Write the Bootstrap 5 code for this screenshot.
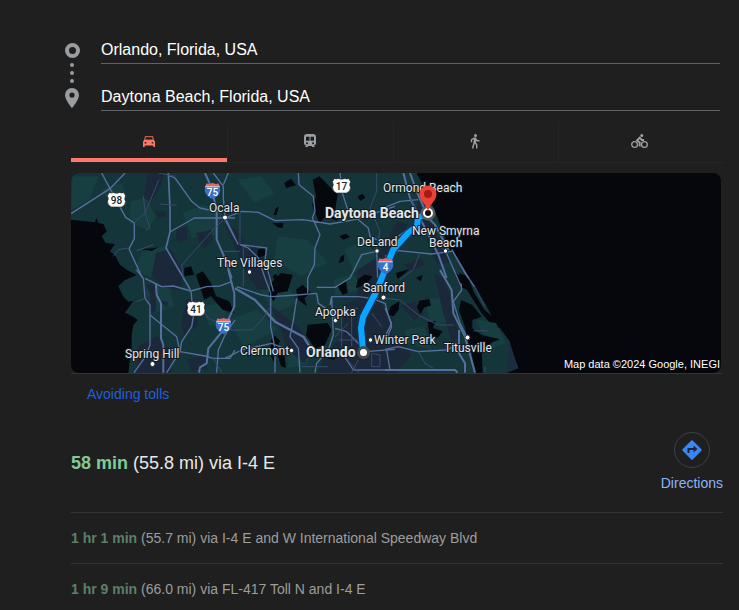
<!DOCTYPE html>
<html lang="en">
<head>
<meta charset="utf-8">
<meta name="viewport" content="width=device-width, initial-scale=1">
<title>Orlando to Daytona Beach</title>
<link href="https://cdn.jsdelivr.net/npm/bootstrap@5.3.0/dist/css/bootstrap.min.css" rel="stylesheet">
<style>
  body { background: #1f1f1f; color: #e8e8e8; font-family: "Liberation Sans", Arial, sans-serif; font-size: 14px; line-height: 20px; }
  .page-shell { padding: 35px 16px 0 65px; }
  .stops { gap: 21px; padding-right: 3px; }
  .stop-rail { margin-top: 8px; }
  .stop-fields { gap: 18px; }
  .stop-input { height: 29px; background: transparent; color: #fff; border: 0; border-bottom: 1px solid #5f6368; border-radius: 0; font-size: 16px; padding: 2px 0 0; }
  .results { margin-left: 6px; }
  .modes { margin-top: 11px; border-bottom: 1px solid #262626; }
  .mode { height: 40px; flex: 1 1 0; background: none; border: 0; border-left: 1px solid #252525; color: #9aa0a6; padding: 0 2px 2px 0; }
  .mode.active { flex: 0 0 24%; border-left: 0; border-bottom: 4px solid #ff7769; color: #ff7769; padding: 2px 0 0; }
  .map-wrap { margin-top: 10px; padding-right: 2px; border-bottom: 1px solid #333436; }
  .map-view { height: 200px; border-radius: 8px; background: #05070c; }
  .place { font-family: Roboto, sans-serif; font-size: 12px; fill: #e4e7ea; stroke: #11191f; stroke-width: 2px; paint-order: stroke; stroke-linejoin: round; }
  .place-major { font-size: 14px; font-weight: 700; }
  .credit { font-family: "Liberation Sans", Arial, sans-serif; font-size: 11px; fill: #fff; }
  .shield-no { font-family: Roboto, sans-serif; font-size: 10px; font-weight: 500; text-anchor: middle; }
  .toll-link { color: #1f60d8; margin: 10px 0 0 16px; }
  .best { margin-top: 28px; padding-bottom: 19px; }
  .best-title { font-size: 18px; line-height: 24px; }
  .time-best { color: #81c995; }
  .directions { color: #8ab4f8; gap: 5px; }
  .dir-circle { width: 36px; height: 36px; border: 1px solid #3c4043; }
  .route-row { height: 51px; border-top: 1px solid #353535; color: #9d9d9d; }
  .route-row b { color: #5c8068; }
</style>
</head>
<body>
<main class="page-shell">
  <form class="stops d-flex">
    <svg class="stop-rail flex-shrink-0" width="15" height="66" viewBox="0 0 15 66" aria-hidden="true">
      <circle cx="7.5" cy="7.5" r="5.5" fill="none" stroke="#9a9da0" stroke-width="4"/>
      <g fill="#9a9da0"><circle cx="7" cy="22" r="2"/><circle cx="7" cy="30" r="2"/><circle cx="7" cy="38" r="2"/>
      <path fill-rule="evenodd" d="M7 45a7 7 0 0 0-7 7c0 5 7 13 7 13s7-8 7-13a7 7 0 0 0-7-7zm0 4.500a2.600 2.600 0 1 1 0 5.200a2.600 2.600 0 0 1 0-5.200z"/></g>
    </svg>
    <div class="stop-fields d-flex flex-column flex-grow-1">
      <input class="stop-input w-100" type="text" aria-label="Starting point" value="Orlando, Florida, USA">
      <input class="stop-input w-100" type="text" aria-label="Destination" value="Daytona Beach, Florida, USA">
    </div>
  </form>

  <section class="results">
    <div class="modes d-flex" role="tablist" aria-label="Travel mode">
      <button class="mode active d-flex align-items-center justify-content-center" type="button" role="tab" aria-selected="true" aria-label="Driving">
        <svg width="12" height="11" viewBox="0 0 12 11"><path d="M2.500.7h7l1 3.300h-9z" fill="none" stroke="#b96543" stroke-width="1.200"/><path fill="currentColor" fill-rule="evenodd" d="M1.300 4h9.400L12 5.500V11h-1.700V9.500H1.700V11H0V5.500zM1.700 6v1.500h1.600V6zm7 0v1.500h1.600V6z"/></svg>
      </button>
      <button class="mode d-flex align-items-center justify-content-center" type="button" role="tab" aria-selected="false" aria-label="Transit">
        <svg width="12" height="14" viewBox="0 0 12 14"><path fill="currentColor" fill-rule="evenodd" d="M3 0h6c2 0 3 1 3 3v6c0 1.500-1 2.300-2.200 2.500L11 13H8.500l-.8-1H4.300l-.8 1H1l1.200-1.500C1 11.300 0 10.500 0 9V3c0-2 1-3 3-3zM2 2.800v4h3.500v-4zm4.500 0v4H10v-4zM3 8.300a1 1 0 1 0 .01 0zm6 0a1 1 0 1 0 .01 0z"/></svg>
      </button>
      <button class="mode d-flex align-items-center justify-content-center" type="button" role="tab" aria-selected="false" aria-label="Walking">
        <svg width="10" height="15" viewBox="0 0 10 15" fill="none" stroke="currentColor"><circle cx="5.500" cy="1.500" r="1.500" fill="currentColor" stroke="none"/><path stroke-width="2.400" d="M4.800 3.500v5.500"/><path stroke-width="1.400" d="M4.500 4L1.500 5.700v2.500M5.500 4.500l1.500 2.200h2.500M4.300 8.500L2.500 14.500M5 8.500l1.700 2v4"/></svg>
      </button>
      <button class="mode d-flex align-items-center justify-content-center" type="button" role="tab" aria-selected="false" aria-label="Cycling">
        <svg width="17" height="15" viewBox="0 0 17 15" fill="none" stroke="currentColor" stroke-width="1.300"><circle cx="3.600" cy="10.500" r="2.900"/><circle cx="13.400" cy="10.500" r="2.900"/><circle cx="10.800" cy="1.600" r="1.500" fill="currentColor" stroke="none"/><path stroke-width="1.900" d="M13 6h-2.200L8.800 3.700L6 6.500l2.700 2v4"/></svg>
      </button>
    </div>

    <div class="map-wrap">
      <svg class="map-view d-block w-100" viewBox="0 0 650 200" preserveAspectRatio="xMinYMid slice" role="img" aria-label="Map of the route from Orlando to Daytona Beach">
        <g transform="scale(.33333)">
          <!-- land -->
          <path fill="#14363b" d="M0 0H1037L1060 45 1092 115 1115 175 1137 230 1190 310 1164 300 1182 341 1207 381 1232 421 1262 456 1287 466 1317 506 1320 531 1342 586 1307 600H172L177 556 182 521 182 486 187 456 200 441 187 431 162 419 187 383 172 386 157 371 147 351 142 339 162 321 197 306 167 290 147 275 132 247 117 235 132 213 104 210 92 190 107 175 97 153 82 150 76 135 72 148 0 140z"/>
          <path fill="#14363b" d="M1190 310L1213 340 1240 388 1262 428 1240 410 1210 360z"/>
          <path fill="#1c2c3f" d="M1317 510L1342 586 1305 596z"/>
          <!-- lighter woodland -->
          <path fill="#173e41" d="M180 85l45-10 30 55-25 40-55-20zM210 240l70-20 20 70-50 25-60-20zM5 10h80l-30 70-55 30zM335 120l60-25 60 20-20 70-70 10zM500 20l70-10 40 50-60 30zM620 190l90 10 60 70-80 40-80-50zM820 230l60-30 40 50-70 50zM220 350l70-20 20 70-60 20zM395 400l60-10 20 60-60 10zM470 440l90-30 60 60-100 50zM560 340l80-20 40 70-70 30zM790 320l60-20 20 50-80 20zM1060 380l80-10 10 70-70 20zM1000 470l60-10 20 70-70-20zM1215 440l60 10 30 60-50 20zM650 510l70-15-10 80-60 10zM90 50l60-20 15 30-40 40z"/>
          <!-- built-up areas -->
          <path fill="#1b283a" d="M230 0h50l-10 40-30 45-22-10zM250 115h35v18h-25zM315 175l30-15 5 40-32 10zM375 180l45-10 5 30-30 30zM255 240l45-12 35 70-5 55-60-15-28-30zM460 150l40 20 25 50 60 10-5 30 20 40-10 50-30 0-35-50-25-60zM225 335h30v80l-18 5v-60zM345 380h35v80l-40 25-10-25zM200 520l60-30 35 40 5 70H195zM265 385h25v20zM600 400l30 20 60 50 30 60-20 40-50-40-20-60zM780 420l70-40 70 0 50 60 -10 50 20 50v60H740l20-50 45-55 10-60zM860 290l60-35 20 50-50 65-30 30zM980 145l30 10-30 60-50 50-10-20zM1040 80l30 30 45 115-35 5-40-100zM1080 235l45-10 15 40-40 10zM1090 300l35 20 15 60 25 110-20 20-30-95zM990 400l40-15 30 35-30 20zM930 480l70 20 20 50-50 50h-50zM350 560l50-15 10 40-50 10zM1000 275l50-20 10 20-40 20z"/>
          <!-- lakes -->
          <path fill="#05080c" d="M725 20l20-10 55 55-10 60 10 20-35-15-20 20-22-55 12-25zM640 30l20-13 15 20-30 8zM710 455l60-5 12 20-20 45-30 12-27-40zM615 105l8-4-6 25-10-1zM605 150l32 0-2 15-15-2zM560 230l20-5 5 20-25 10zM605 310l10-8 8 15-10 10zM805 190l20-8 12 10-20 8zM810 250l10-5-2 20-15 5zM860 70l15-8 8 12-15 10zM340 285l20-5 10 25-30 5zM212 228l35-2 15-4-20 12zM375 305l20-10 25 35 15 40 40 15 15 35-35-10-35-40-20 10-15-45zM600 330l30-30 35 5-15 50-30 5-12 25-15-20zM675 350l20-15 25 25-20 15 8 25-25-18zM600 500l12-12 15 15-10 25-8 40-12-25zM620 545l20 0 5 40-15-5zM780 525l20 15-10 20-25-5zM800 340l25-15 5 35-15 5zM860 320l20-15 25 5-20 25-30 10zM960 400l25-15-2 25-15 20-20-5zM975 300l40-12-10 10-25 20zM1045 383l30-5 5 20-20 5-12 20-10-20zM1070 447l25-2-10 20 30 10-15 20-25-5zM1035 315l20-10-5 20zM1170 381l34 15 28 35-28 10 0 25 28 20 55 13-20 7-35 25 3 69h-21l-14-68-13-40-5-30-18-50zM1150 300l22 10 15 40-20-10z"/>
          <!-- roads -->
          <g fill="none" stroke="#566f9d" stroke-linejoin="round">
            <g transform="translate(-18 -15)">
              <path stroke-width="4" d="M18 137L135 62 180 15M110 15L135 62 182 148 208 165V212L192 243 232 330M310 22L330 30 380 100 405 120 450 130M315 192L388 150H510M445 15L475 55V90L480 148 510 210M475 50L490 15"/>
              <path stroke-width="5" d="M310 15L315 120V192L303 240 376 365"/>
              <path stroke-width="6" d="M420 15L440 60 455 130V215L475 260 500 330"/>
              <path stroke="#3a4a6c" stroke-width="3" d="M208 163L240 135 282 35M240 135L255 180 243 187M285 108L335 112M145 265L160 245 190 240M215 248L265 230M350 292L440 190 480 150M350 290L355 330M235 85L240 130M280 15L330 25M475 250h35"/>
            </g>
            <g transform="translate(462 -15)">
              <path stroke-width="4" d="M0 150L50 130 100 133 150 158 235 155 315 168 390 155 510 115M220 15L222 50 265 85 270 130 262 150 285 200 270 240 268 290 248 330V375M345 15L352 75 370 130 400 155 430 180 435 205 455 215M0 155L40 230M45 230L70 240 100 270 120 330 137 375M45 230L125 240 120 275 145 370M455 250L410 260 375 330 330 358H275M455 250L458 330"/>
              <path stroke="#3a4a6c" stroke-width="3" d="M455 15V70L435 120 465 190 455 240M45 130V230M0 250H45M55 235V355"/>
            </g>
            <g transform="translate(942 -15)">
              <path stroke-width="6" d="M55 15L75 90 110 160 160 260 185 330M75 15L95 70 130 150 150 170 190 245"/>
              <path stroke-width="5" d="M200 245L250 330"/>
              <path stroke-width="4" d="M0 118L45 100 100 95M40 205L100 160M0 265L40 248 140 258 200 250M180 245L228 355"/>
              <path stroke="#3a4a6c" stroke-width="3" d="M105 255L85 305 45 335M75 90L95 125"/>
            </g>
            <g transform="translate(-18 291)">
              <path stroke-width="4" d="M215 0L235 25 240 85 255 105V225L240 262 207 308M240 25L290 50 325 48 378 63 425 50 465 48 500 35M378 63L385 140 380 170 350 215 345 245 305 308M255 135L335 200 345 245 420 258 445 265H495L510 240M455 308L460 240 480 195 510 150"/>
              <path stroke-width="6" d="M273 42L275 75 288 100V205L295 225V308M490 0L508 70V110L475 180 430 235 425 280 405 292 402 308"/>
              <path stroke="#3a4a6c" stroke-width="3" d="M215 95L240 85M390 90L430 145 500 175M445 265L470 308"/>
            </g>
            <g transform="translate(462 291)">
              <path stroke-width="7" d="M30 55L90 90 150 155 235 200 260 240"/>
              <path stroke-width="4" d="M35 50L110 75 140 80 215 75 275 70 280 100 325 130 330 150M137 70L137 170 150 235V308M215 85L205 150 195 200 220 235 225 308M0 265L50 240 140 220 190 240M250 235L320 240M315 105L320 80H400L440 85 480 100 500 170 480 220M320 80L325 195 310 240 275 280 270 308M330 175L365 185 405 225M345 240L385 300H510M420 245L510 238"/>
              <path stroke="#3a4a6c" stroke-width="3" d="M0 180H80L110 150 137 110M370 160L330 200M340 115H400M350 140V230M380 140V230M340 210H400M360 260L400 308M440 250V290H465V255zM400 270L380 308M440 130L470 170M230 290H310"/>
            </g>
            <g transform="translate(942 291)">
              <path stroke-width="6" d="M165 0L200 60 205 130 225 170 240 200 270 308M222 180V250L240 280V308M0 300H210L218 308"/>
              <path stroke-width="4" d="M228 40L230 60 205 95 225 160 248 205M0 238L40 230 100 245 180 240 225 225M235 0L268 50M0 115L20 160 0 200M5 240L15 300"/>
              <path stroke="#3a4a6c" stroke-width="3" d="M0 85L45 90 100 135 160 165H205M100 245L120 280 145 295M265 183L308 182M300 290V308M268 50L300 110"/>
            </g>
          </g>
        </g>
        <!-- chosen route -->
        <path fill="none" stroke="#0d3565" stroke-width="8" stroke-linejoin="round" d="M356 40L347 45 346 53 337 60 322 77 314 97 306 117 292 144 290 155 292 177"/>
        <path fill="none" stroke="#0aa5ff" stroke-width="6" stroke-linejoin="round" d="M356 40L347 45 346 53 337 60 322 77 314 97 306 117 292 144 290 155 292 177"/>

        <!-- road shields -->
        <defs>
          <path id="us" d="M-7-7.500q2 1 3.500 0q3.500 1.500 7 0q1.500 1 3.500 0l2 3q-1.500 3 0 6q0 4-4 5.500H-5q-4-1.500-4-5.500q1.500-3 0-6z" fill="#fff" stroke="#222" stroke-width=".6"/>
          <g id="interstate"><path d="M-6-7.500q3 1 6-.5q3 1.500 6 .5Q8.500-3 7.500 1 6 5.500 0 8-6 5.500-7.500 1-8.500-3-6-7.500z" fill="#3871c8"/><path d="M-6-7.500q3 1 6-.5q3 1.500 6 .5l1.200 3H-7.200z" fill="#e3675c"/><path d="M-7.200-4.200H7.200" stroke="#fff" stroke-width=".8"/></g>
        </defs>
        <g class="shield-no" fill="#222">
          <use href="#us" x="45.500" y="27"/><text x="45.500" y="31">98</text>
          <use href="#us" x="270.500" y="13"/><text x="270.500" y="17">17</text>
          <use href="#us" x="125" y="136"/><text x="125" y="140">41</text>
        </g>
        <g class="shield-no" fill="#fff">
          <use href="#interstate" x="141.500" y="18"/><text x="141.500" y="23">75</text>
          <use href="#interstate" x="152.500" y="153"/><text x="152.500" y="158">75</text>
          <use href="#interstate" x="314.500" y="93"/><text x="314.500" y="98">4</text>
        </g>

        <!-- towns -->
        <g fill="#fff" stroke="#222b33" stroke-width="1">
          <circle cx="154" cy="44.500" r="2.500"/><circle cx="178.500" cy="99" r="2.200"/><circle cx="81.500" cy="191" r="2.500"/><circle cx="306" cy="78" r="2.200"/><circle cx="374.500" cy="78" r="2.200"/><circle cx="312.500" cy="124.500" r="2.500"/><circle cx="264.500" cy="147.500" r="2.200"/><circle cx="220.500" cy="177.500" r="2.200"/><circle cx="299.500" cy="167" r="2.200"/><circle cx="396.500" cy="164.500" r="2.500"/>
        </g>
        <circle cx="292.500" cy="179.500" r="5" fill="#fff" stroke="#45494c" stroke-width="3"/>
        <circle cx="357" cy="40" r="7.500" fill="#55595c"/>
        <circle cx="357" cy="40" r="4" fill="#111" stroke="#fff" stroke-width="2"/>
        <g class="place">
          <text x="138" y="39">Ocala</text>
          <text x="146" y="94">The Villages</text>
          <text x="54" y="185">Spring Hill</text>
          <text x="169" y="182">Clermont</text>
          <text x="244" y="143">Apopka</text>
          <text x="292" y="119">Sanford</text>
          <text x="286" y="73">DeLand</text>
          <text x="312" y="19">Ormond Beach</text>
          <text x="341" y="62">New Smyrna<tspan x="358" dy="12">Beach</tspan></text>
          <text x="303" y="171">Winter Park</text>
          <text x="373" y="179">Titusville</text>
          <text class="place-major" x="254" y="45">Daytona Beach</text>
          <text class="place-major" x="235" y="184">Orlando</text>
        </g>
        <path d="M357 38.500C355.500 31 348.500 28 348.500 21a8.500 8.500 0 0 1 17 0C365.500 28 358.500 31 357 38.500z" fill="#ea4335"/>
        <circle cx="357" cy="21" r="4" fill="#a31a17"/>
        <text class="credit" x="649" y="195" text-anchor="end">Map data ©2024 Google, INEGI</text>
      </svg>
    </div>

    <a class="toll-link d-inline-block text-decoration-none" href="#">Avoiding tolls</a>

    <div class="best d-flex align-items-center justify-content-between">
      <h1 class="best-title fw-normal mb-0"><b class="time-best">58 min</b> (55.8 mi) via I-4 E</h1>
      <a class="directions d-flex flex-column align-items-center text-decoration-none" href="#">
        <span class="dir-circle rounded-circle d-flex align-items-center justify-content-center">
          <svg width="20" height="20" viewBox="0 0 20 20" aria-hidden="true"><path d="M9.300.6q.7-.7 1.400 0l8.700 8.700q.7.7 0 1.400l-8.700 8.700q-.7.7-1.400 0L.6 10.700q-.7-.7 0-1.400z" fill="#3b86f7"/><path d="M6.500 13V9h6" fill="none" stroke="#1f2430" stroke-width="2"/><path d="M11.500 5.500l4 3.500-4 3.500z" fill="#1f2430"/></svg>
        </span>
        <span>Directions</span>
      </a>
    </div>

    <ul class="list-unstyled mb-0">
      <li class="route-row d-flex align-items-center"><span><b>1 hr 1 min</b> (55.7 mi) via I-4 E and W International Speedway Blvd</span></li>
      <li class="route-row d-flex align-items-center"><span><b>1 hr 9 min</b> (66.0 mi) via FL-417 Toll N and I-4 E</span></li>
    </ul>
  </section>
</main>
<script src="https://cdn.jsdelivr.net/npm/bootstrap@5.3.0/dist/js/bootstrap.bundle.min.js"></script>
</body>
</html>
